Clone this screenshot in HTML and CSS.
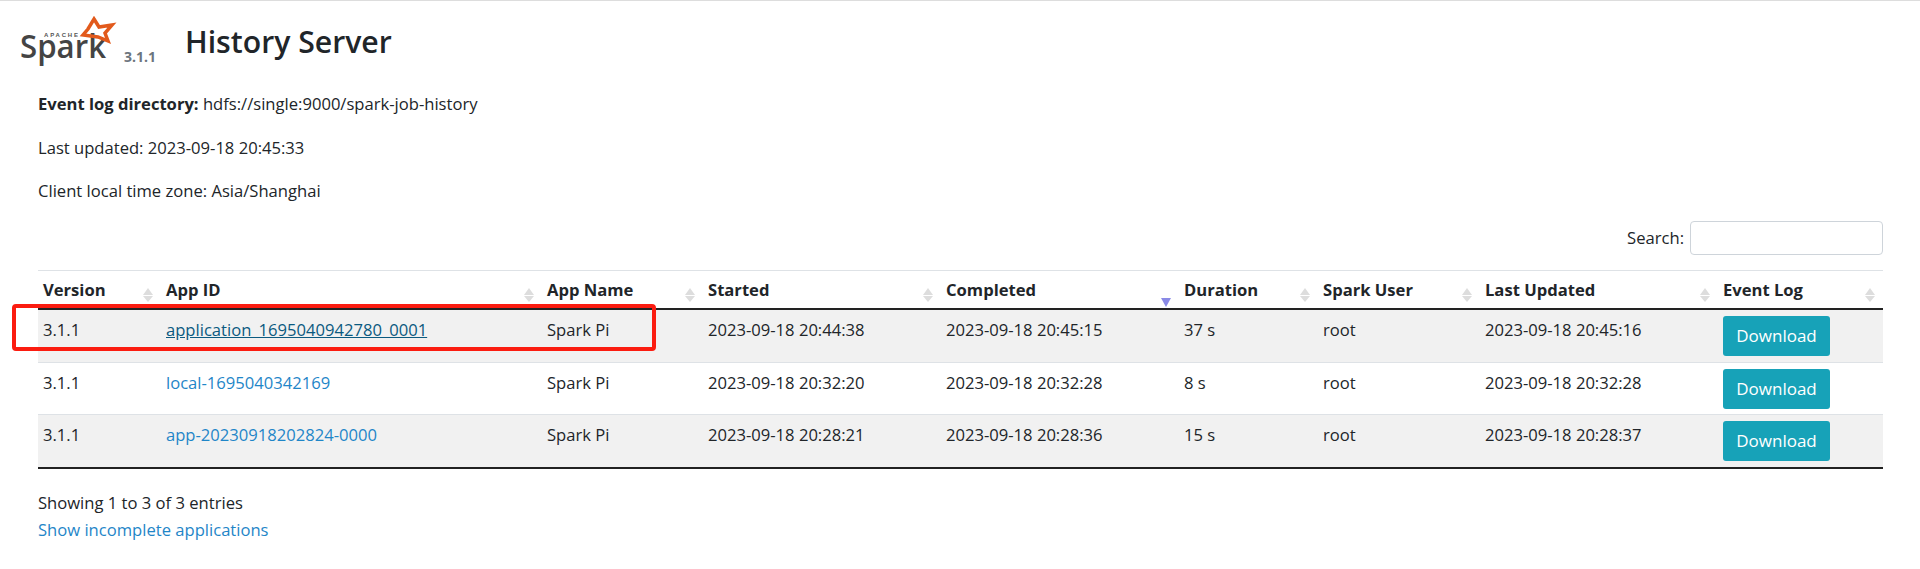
FILE: index.html
```html
<!DOCTYPE html>
<html lang="en">
<head>
    <meta charset="UTF-8">
    <title>History Server</title>
    <link rel="stylesheet" href="styles.css">
</head>
<body>
    <div class="page-header">
        <div class="brand">
            <svg class="spark-logo" width="102" height="50" viewBox="0 0 102 50">
                <text x="24" y="22" class="logo-apache" textLength="34">APACHE</text>
                <text x="0" y="43" class="logo-spark" textLength="86" lengthAdjust="spacingAndGlyphs">Spark</text>
                <path d="M74 4 L79 12 L92 10 L85 18 L88 26 L78 22 L63 20 L68 14 Z" class="logo-star"/>
            </svg>
            <span class="version">3.1.1</span>
        </div>
        <h1>History Server</h1>
    </div>

    <div class="info">
        <p><strong>Event log directory:</strong> hdfs://single:9000/spark-job-history</p>
        <p>Last updated: 2023-09-18 20:45:33</p>
        <p>Client local time zone: Asia/Shanghai</p>
    </div>

    <div class="search-row">
        <label for="search">Search:</label>
        <input id="search" type="text">
    </div>

    <table class="apps">
        <colgroup>
            <col class="c-version"><col class="c-id"><col class="c-name"><col class="c-started"><col class="c-completed"><col class="c-duration"><col class="c-user"><col class="c-updated"><col class="c-log">
        </colgroup>
        <thead>
            <tr>
                <th><div class="th-inner">Version<span class="sort"></span></div></th>
                <th><div class="th-inner">App ID<span class="sort"></span></div></th>
                <th><div class="th-inner">App Name<span class="sort"></span></div></th>
                <th><div class="th-inner">Started<span class="sort"></span></div></th>
                <th><div class="th-inner">Completed<span class="sort sort-desc"></span></div></th>
                <th><div class="th-inner">Duration<span class="sort"></span></div></th>
                <th><div class="th-inner">Spark User<span class="sort"></span></div></th>
                <th><div class="th-inner">Last Updated<span class="sort"></span></div></th>
                <th><div class="th-inner">Event Log<span class="sort"></span></div></th>
            </tr>
        </thead>
        <tbody>
            <tr class="odd">
                <td>3.1.1</td>
                <td><a href="#" class="visited">application_1695040942780_0001</a></td>
                <td>Spark Pi</td>
                <td>2023-09-18 20:44:38</td>
                <td>2023-09-18 20:45:15</td>
                <td>37 s</td>
                <td>root</td>
                <td>2023-09-18 20:45:16</td>
                <td><a href="#" class="btn">Download</a></td>
            </tr>
            <tr>
                <td>3.1.1</td>
                <td><a href="#">local-1695040342169</a></td>
                <td>Spark Pi</td>
                <td>2023-09-18 20:32:20</td>
                <td>2023-09-18 20:32:28</td>
                <td>8 s</td>
                <td>root</td>
                <td>2023-09-18 20:32:28</td>
                <td><a href="#" class="btn">Download</a></td>
            </tr>
            <tr class="odd">
                <td>3.1.1</td>
                <td><a href="#">app-20230918202824-0000</a></td>
                <td>Spark Pi</td>
                <td>2023-09-18 20:28:21</td>
                <td>2023-09-18 20:28:36</td>
                <td>15 s</td>
                <td>root</td>
                <td>2023-09-18 20:28:37</td>
                <td><a href="#" class="btn">Download</a></td>
            </tr>
        </tbody>
    </table>

    <div class="table-info">Showing 1 to 3 of 3 entries</div>
    <a href="#" class="incomplete">Show incomplete applications</a>

    <!-- red box drawn on the screenshot -->
    <div class="highlight"></div>
</body>
</html>
```

FILE: styles.css
```css
body {
    margin: 0;
    padding: 0 37px 0 38px;
    border-top: 1px solid #ddd;
    background: #fff;
    color: #212529;
    font-family: "Open Sans", "Noto Sans", sans-serif;
    font-size: 16.6px;
    line-height: 27px;
    position: relative;
    min-height: 568px;
    box-sizing: border-box;
}

a {
    color: #1f86c8;
    text-decoration: none;
}

.page-header {
    display: flex;
    align-items: flex-start;
    margin-left: -18px;
    height: 89px;
}

.brand {
    display: flex;
    align-items: flex-end;
    width: 165px;
    height: 64px;
}

.spark-logo {
    margin-top: 15px;
    flex: none;
    overflow: visible;
}

.logo-apache {
    font: bold 6px "Liberation Sans", sans-serif;
    fill: #555;
}

.logo-spark {
    font: 600 32px "Open Sans", sans-serif;
    fill: #444;
}

.logo-star {
    fill: none;
    stroke: #e25a1c;
    stroke-width: 3.5;
    stroke-linejoin: miter;
}

.version {
    font-size: 14px;
    font-weight: 700;
    line-height: 16px;
    color: #6c757d;
    margin-left: 2px;
}

h1 {
    margin: 20px 0 0;
    font-size: 30.2px;
    line-height: 42px;
    font-weight: 600;
}

.info p {
    margin: 0 0 16.5px;
}

.info strong {
    font-weight: 700;
}

.search-row {
    display: flex;
    justify-content: flex-end;
    align-items: center;
    gap: 6px;
    height: 34px;
}

.search-row input {
    width: 193px;
    height: 34px;
    box-sizing: border-box;
    border: 1px solid #ced4da;
    border-radius: 4px;
}

.apps {
    width: 100%;
    table-layout: fixed;
    border-collapse: collapse;
    margin-top: 15px;
}

.c-version { width: 123px; }
.c-id { width: 381px; }
.c-name { width: 161px; }
.c-started { width: 238px; }
.c-completed { width: 238px; }
.c-duration { width: 139px; }
.c-user { width: 162px; }
.c-updated { width: 238px; }

th {
    height: 37px;
    padding: 0 5px;
    text-align: left;
    font-weight: 700;
    border-top: 1px solid #dee2e6;
    border-bottom: 2px solid #222;
}

.th-inner {
    display: flex;
    justify-content: space-between;
    align-items: center;
    padding-right: 3px;
}

.sort {
    display: inline-block;
    width: 0;
    height: 14px;
    margin-top: 12px;
    position: relative;
    border-left: 5px solid transparent;
    border-right: 5px solid transparent;
}

.sort::before,
.sort::after {
    content: "";
    position: absolute;
    left: -5.5px;
    border-left: 5.5px solid transparent;
    border-right: 5.5px solid transparent;
}

.sort::before {
    top: 0;
    border-bottom: 7px solid #ddd;
}

.sort::after {
    bottom: 0;
    border-top: 6px solid #ddd;
}

.sort-desc::before {
    display: none;
}

.sort-desc::after {
    bottom: -5px;
    border-top: 9px solid #8a8ae6;
}

td {
    padding: 6px 5px 0;
    height: 45px;
    vertical-align: top;
    border-top: 1px solid #dee2e6;
}

tbody tr:first-child td {
    height: 46px;
    border-top: none;
}

tbody tr:last-child td {
    height: 46px;
    border-bottom: 2px solid #222;
}

.odd td {
    background: #f1f1f1;
}

.visited {
    color: #0b5a80;
    text-decoration: underline;
}

.btn {
    display: block;
    width: 107px;
    height: 40px;
    box-sizing: border-box;
    background: #17a2b8;
    color: #fff;
    font-size: 17px;
    line-height: 40px;
    text-align: center;
    border-radius: 3px;
}

.table-info {
    margin-top: 20px;
}

.highlight {
    position: absolute;
    left: 12px;
    top: 303px;
    width: 644px;
    height: 47px;
    box-sizing: border-box;
    border: 4px solid #fb1c10;
    border-radius: 4px;
}
```
